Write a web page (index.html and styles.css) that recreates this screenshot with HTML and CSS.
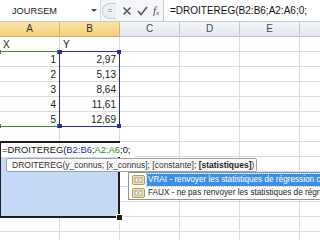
FILE: index.html
```html
<!DOCTYPE html>
<html lang="fr">
<head>
<meta charset="utf-8">
<title>Excel - DROITEREG</title>
<link rel="stylesheet" href="styles.css">
</head>
<body>
<div class="app">
  <div class="fbar">
    <div class="namebox"><span class="nb-text">JOURSEM</span><span class="nb-arrow"></span></div>
    <div class="tools">
      <div class="grip"><span class="grip-mark"></span></div>
      <svg class="ico" width="10" height="10" viewBox="0 0 10 10"><path d="M1.5 1.5 L8.5 8.5 M8.5 1.5 L1.5 8.5" stroke="#555" stroke-width="1.6" fill="none"/></svg>
      <svg class="ico" width="11" height="10" viewBox="0 0 11 10"><path d="M1 5 L4 8.5 L10 1" stroke="#555" stroke-width="1.6" fill="none"/></svg>
      <span class="fx">f<sub>x</sub></span>
    </div>
    <div class="finput">=DROITEREG(B2:B6;A2:A6;0;</div>
  </div>

  <div class="sheet">
    <div class="grid">
      <div class="hd on">A</div><div class="hd on">B</div><div class="hd">C</div><div class="hd">D</div><div class="hd">E</div><div class="hd"></div>

      <div class="c">X</div><div class="c">Y</div><div class="c"></div><div class="c"></div><div class="c"></div><div class="c"></div>
      <div class="c n">1</div><div class="c n">2,97</div><div class="c"></div><div class="c"></div><div class="c"></div><div class="c"></div>
      <div class="c n">2</div><div class="c n">5,13</div><div class="c"></div><div class="c"></div><div class="c"></div><div class="c"></div>
      <div class="c n">3</div><div class="c n">8,64</div><div class="c"></div><div class="c"></div><div class="c"></div><div class="c"></div>
      <div class="c n">4</div><div class="c n">11,61</div><div class="c"></div><div class="c"></div><div class="c"></div><div class="c"></div>
      <div class="c n">5</div><div class="c n">12,69</div><div class="c"></div><div class="c"></div><div class="c"></div><div class="c"></div>
      <div class="c"></div><div class="c"></div><div class="c"></div><div class="c"></div><div class="c"></div><div class="c"></div>
      <div class="c"></div><div class="c sel"></div><div class="c"></div><div class="c"></div><div class="c"></div><div class="c"></div>
      <div class="c sel"></div><div class="c sel"></div><div class="c"></div><div class="c"></div><div class="c"></div><div class="c"></div>
      <div class="c sel"></div><div class="c sel"></div><div class="c"></div><div class="c"></div><div class="c"></div><div class="c"></div>
      <div class="c sel"></div><div class="c sel"></div><div class="c"></div><div class="c"></div><div class="c"></div><div class="c"></div>
      <div class="c sel"></div><div class="c sel"></div><div class="c"></div><div class="c"></div><div class="c"></div><div class="c"></div>
      <div class="c"></div><div class="c"></div><div class="c"></div><div class="c"></div><div class="c"></div><div class="c"></div>
      <div class="c"></div><div class="c"></div><div class="c"></div><div class="c"></div><div class="c"></div><div class="c"></div>
    </div>

    <div class="rng rng-green"><i class="h tl"></i><i class="h tr"></i><i class="h bl"></i><i class="h br"></i></div>
    <div class="rng rng-blue"><i class="h tl"></i><i class="h tr"></i><i class="h bl"></i><i class="h br"></i></div>

    <div class="selbox"><i class="fill"></i></div>

    <div class="editor">=DROITEREG(<span class="rb">B2:B6</span>;<span class="rg">A2:A6</span>;0;</div>

    <div class="tip">DROITEREG(y_connus; [x_connus]; [constante]; <b>[statistiques]</b>)</div>

    <div class="dd">
      <div class="dd-item active">
        <svg class="dd-ico" width="13" height="10" viewBox="0 0 13 10"><rect x="0.5" y="0.5" width="12" height="9" rx="1.5" fill="#f2e2ab" stroke="#b59a4e"/><rect x="3" y="3" width="7" height="4" fill="#fff" stroke="#8a8a8a" stroke-width="0.8"/><path d="M5 5 H8" stroke="#777" stroke-width="0.8"/></svg>
        <span class="dd-text">VRAI -  renvoyer les statistiques de régression complémentaires</span>
      </div>
      <div class="dd-item">
        <svg class="dd-ico" width="13" height="10" viewBox="0 0 13 10"><rect x="0.5" y="0.5" width="12" height="9" rx="1.5" fill="#f2e2ab" stroke="#b59a4e"/><rect x="3" y="3" width="7" height="4" fill="#fff" stroke="#8a8a8a" stroke-width="0.8"/><path d="M5 5 H8" stroke="#777" stroke-width="0.8"/></svg>
        <span class="dd-text">FAUX - ne pas renvoyer les statistiques de régression complémentaires</span>
      </div>
    </div>
  </div>
</div>
</body>
</html>
```

FILE: styles.css
```css
* { box-sizing: border-box; }
html, body { margin: 0; padding: 0; }
body {
  width: 320px;
  height: 240px;
  overflow: hidden;
  background: #fff;
  font-family: "Liberation Sans", Arial, sans-serif;
  color: #1a1a1a;
}
.app { width: 320px; height: 240px; position: relative; overflow: hidden; }

/* formula bar */
.fbar {
  height: 22px;
  display: flex;
  align-items: stretch;
  background: #f4f6f9;
  border-bottom: 1px solid #c5cad2;
}
.namebox {
  width: 101px;
  background: #fff;
  border-right: 1px solid #d5d9df;
  display: flex;
  align-items: center;
  padding-left: 12px;
}
.nb-text { font-size: 9.2px; color: #222; letter-spacing: 0; flex: 1; }
.nb-arrow {
  width: 0; height: 0;
  border-left: 3px solid transparent;
  border-right: 3px solid transparent;
  border-top: 3px solid #444;
  margin-right: 3px;
}
.tools {
  width: 62px;
  display: flex;
  align-items: center;
  gap: 5px;
  padding-left: 1px;
}
.grip {
  width: 14px;
  height: 16px;
  border: 1px solid #c9ced6;
  border-right: none;
  border-radius: 8px 0 0 8px;
  background: #eceff3;
  display: flex;
  align-items: center;
  justify-content: center;
  margin-right: 1px;
}
.grip-mark { width: 4px; height: 3px; border-top: 1px solid #aab; border-bottom: 1px solid #aab; }
.ico { display: block; }
.fx {
  font-family: "Liberation Serif", "Times New Roman", serif;
  font-style: italic;
  font-size: 11px;
  color: #444;
  line-height: 1;
}
.fx sub { font-size: 7px; vertical-align: -1px; }
.finput {
  flex: 1;
  background: #fff;
  border-left: 1px solid #c5cad2;
  font-size: 10px;
  line-height: 21px;
  padding-left: 6px;
  white-space: nowrap;
  color: #111;
}

/* sheet */
.sheet { position: relative; }
.grid {
  display: grid;
  grid-template-columns: repeat(6, 60px);
  grid-auto-rows: 15px;
}
.hd {
  background: linear-gradient(#f4f6f9, #e3e7ed);
  border-right: 1px solid #c3c9d1;
  border-bottom: 1px solid #bcc3cc;
  font-size: 10px;
  line-height: 14px;
  text-align: center;
  color: #3b4a5c;
}
.hd.on {
  background: linear-gradient(#fbe4a9, #f5cf7d);
  border-right-color: #d9b463;
  border-bottom-color: #e0a84a;
  color: #333;
}
.c {
  border-right: 1px solid #dadcdf;
  border-bottom: 1px solid #dadcdf;
  font-size: 10px;
  line-height: 15px;
  padding: 0 3px;
  white-space: nowrap;
  overflow: hidden;
}
.c.n { text-align: right; }
.c.sel { background: #c3d9f5; border-color: #c3d9f5; }

/* range references */
.rng { position: absolute; border: 1px solid; }
.rng-green { left: -2px; top: 29px; width: 62px; height: 76px; border-color: #3a8a3a; }
.rng-blue { left: 59px; top: 29px; width: 61px; height: 76px; border-color: #2b2ba8; }
.rng .h { position: absolute; width: 4px; height: 4px; }
.rng-green .h { background: #3a8a3a; }
.rng-blue .h { background: #2b2ba8; }
.h.tl { left: -2px; top: -2px; }
.h.tr { right: -2px; top: -2px; }
.h.bl { left: -2px; bottom: -2px; }
.h.br { right: -2px; bottom: -2px; }

/* selection A8:B12 */
.selbox {
  position: absolute;
  left: -1px;
  top: 119px;
  width: 121px;
  height: 77px;
  border: 2px solid #1e1e1e;
}
.selbox .fill {
  position: absolute;
  right: -4px;
  bottom: -4px;
  width: 5px;
  height: 5px;
  background: #1e1e1e;
  outline: 1px solid #fff;
}

/* in-cell editor */
.editor {
  position: absolute;
  left: 1px;
  top: 121px;
  width: 133px;
  height: 14px;
  background: #fff;
  font-size: 9.4px;
  line-height: 14px;
  padding-left: 1px;
  white-space: nowrap;
  color: #111;
}
.rb { color: #2b2bb0; }
.rg { color: #2e862e; }

/* function tooltip */
.tip {
  position: absolute;
  left: 6px;
  top: 136px;
  width: 251px;
  height: 14px;
  background: #fbfbfb;
  border: 1px solid #a2a2a2;
  border-radius: 2px;
  font-size: 8.5px;
  line-height: 12px;
  padding-left: 5px;
  white-space: nowrap;
  color: #333;
}
.tip b { color: #222; }

/* autocomplete list */
.dd {
  position: absolute;
  left: 128px;
  top: 150px;
  width: 230px;
  height: 28px;
  background: #fff;
  border: 1px solid #8f9296;
  padding: 1px 0 0 3px;
}
.dd-item {
  display: flex;
  align-items: center;
  height: 12.5px;
  white-space: nowrap;
}
.dd-ico { flex: none; margin-right: 2px; }
.dd-text {
  font-size: 8.2px;
  line-height: 12px;
  padding-left: 1px;
  color: #222;
  flex: 1;
}
.dd-item.active .dd-text { background: #3c8fe6; color: #fff; outline: 1px dotted #9cc6f2; }
```
